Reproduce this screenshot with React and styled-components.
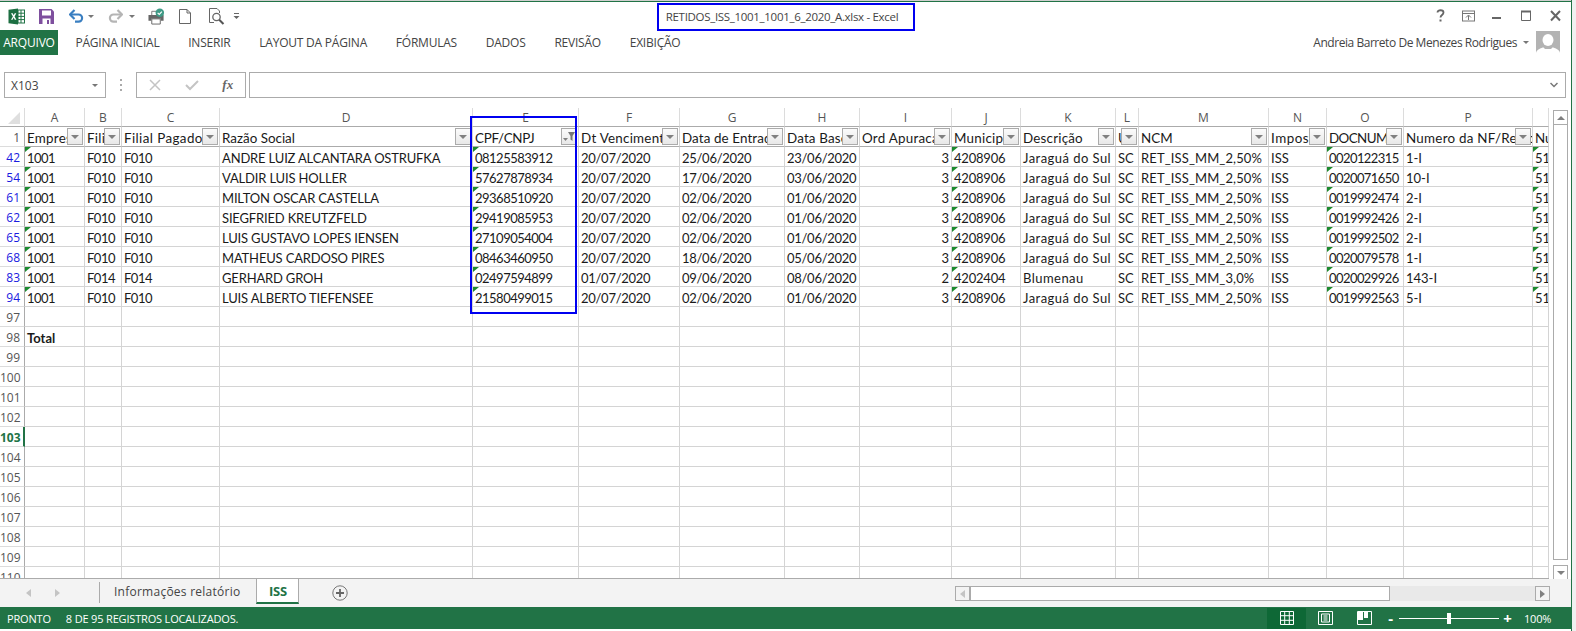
import React from "react";
import styled, { createGlobalStyle } from "styled-components";

const Global = createGlobalStyle`
  html, body { margin: 0; padding: 0; background: #e8e8e8; }
  body { width: 1576px; height: 631px; overflow: hidden; font-family: "Open Sans", "Liberation Sans", sans-serif; }
`;

const GREEN = "#217346";

const Page = styled.div`
  position: relative;
  width: 1576px;
  height: 631px;
  overflow: hidden;
`;
const Win = styled.div`
  width: 1571px;
  height: 631px;
  background: #fff;
  border-right: 1px solid ${GREEN};
  display: flex;
  flex-direction: column;
`;
const TopStrip = styled.div`
  height: 1px;
  flex: none;
  box-sizing: content-box;
  background: #cfcfcf;
  border-bottom: 1px solid ${GREEN};
`;
const TitleBar = styled.div`
  height: 28px;
  flex: none;
  display: grid;
  grid-template-columns: 1fr auto 1fr;
  align-items: center;
`;
const Qat = styled.div`
  display: flex;
  align-items: center;
`;
const QatItem = styled.span`
  display: flex;
  margin-left: ${(p) => p.$ml}px;
`;
const Title = styled.div`
  font-size: 11.5px;
  color: #444;
  letter-spacing: -0.31px;
  white-space: nowrap;
  padding-right: 7px;
`;
const WinControls = styled.div`
  display: flex;
  justify-content: flex-end;
  align-items: center;
  padding-right: 3px;
`;
const Ribbon = styled.div`
  height: 25px;
  flex: none;
  display: flex;
  align-items: center;
`;
const FileTab = styled.div`
  width: 58px;
  height: 25px;
  background: ${GREEN};
  color: #fff;
  font-size: 12px;
  line-height: 25px;
  text-align: center;
  letter-spacing: -0.2px;
  margin-right: 3px;
`;
const RibbonTab = styled.div`
  font-size: 12px;
  color: #444;
  padding: 0 14.4px;
  letter-spacing: -0.22px;
  white-space: nowrap;
`;
const Account = styled.div`
  margin-left: auto;
  display: flex;
  align-items: center;
  font-size: 12px;
  color: #444;
  letter-spacing: -0.45px;
  padding-right: 11px;
  height: 25px;
`;
const Caret = styled.span`
  width: 0;
  height: 0;
  border-left: 3px solid transparent;
  border-right: 3px solid transparent;
  border-top: 3px solid #777;
  margin: 0 ${(p) => p.$mr ?? 7}px 0 ${(p) => p.$ml ?? 6}px;
`;
const FormulaBar = styled.div`
  height: 26px;
  flex: none;
  margin: 17px 5px 10px 4px;
  display: flex;
  align-items: stretch;
`;
const NameBox = styled.div`
  width: 102px;
  box-sizing: border-box;
  border: 1px solid #ababab;
  display: flex;
  align-items: center;
  justify-content: space-between;
  padding: 0 6px;
  font-size: 12px;
  color: #444;
`;
const Dots = styled.div`
  width: 30px;
  display: flex;
  flex-direction: column;
  align-items: center;
  justify-content: center;
  gap: 3px;
  & > i { width: 2px; height: 2px; background: #aaa; display: block; }
`;
const FnBox = styled.div`
  width: 110px;
  box-sizing: border-box;
  border: 1px solid #ababab;
  display: flex;
  align-items: center;
  justify-content: space-around;
  margin-right: 3px;
  color: #bbb;
`;
const Fx = styled.span`
  font: italic 700 13px "Liberation Serif", serif;
  color: #666;
`;
const FormulaInput = styled.div`
  flex: 1;
  box-sizing: border-box;
  border: 1px solid #ababab;
  display: flex;
  align-items: center;
  justify-content: flex-end;
  padding-right: 7px;
`;
const GridArea = styled.div`
  height: 471px;
  flex: none;
  display: flex;
  align-items: flex-start;
`;
const GridClip = styled.div`
  width: 1549px;
  height: 471px;
  overflow: hidden;
  border-bottom: 1px solid #ababab;
  box-sizing: border-box;
  flex: none;
`;
const Sheet = styled.table`
  border-collapse: separate;
  border-spacing: 0;
  table-layout: fixed;
  width: 1549px;
  font-family: Lato, "Open Sans", sans-serif;
  font-size: 13px;
  color: #1a1a1a;
`;
const ColHead = styled.th`
  height: 19px;
  box-sizing: border-box;
  padding: 0;
  font-weight: 400;
  font-family: "Open Sans", sans-serif;
  font-size: 12px;
  color: #555;
  text-align: center;
  border-right: 1px solid #dcdcdc;
  border-bottom: 1px solid #ababab;
  position: relative;
`;
const Corner = styled.th`
  height: 19px;
  box-sizing: border-box;
  padding: 0;
  position: relative;
  border-right: 1px solid #dcdcdc;
  border-bottom: 1px solid #ababab;
  &::after {
    content: "";
    position: absolute;
    right: 4px;
    bottom: 2px;
    border-left: 12px solid transparent;
    border-bottom: 12px solid #dfdfdf;
  }
`;
const RowHead = styled.td`
  height: 20px;
  box-sizing: border-box;
  padding: 2px 4px 0 0;
  vertical-align: top;
  text-align: right;
  font-family: "Open Sans", sans-serif;
  font-size: 12px;
  line-height: 17px;
  color: ${(p) => (p.$hit ? "#1a1ae0" : p.$active ? GREEN : "#555")};
  font-weight: ${(p) => (p.$active ? 700 : 400)};
  border-bottom: 1px solid #dcdcdc;
  border-right: ${(p) => (p.$active ? `2px solid ${GREEN}` : "1px solid #ababab")};
  white-space: nowrap;
  overflow: hidden;
`;
const Cell = styled.td`
  height: 20px;
  box-sizing: border-box;
  padding: 4px 2px 0;
  line-height: 15px;
  vertical-align: top;
  position: relative;
  white-space: nowrap;
  overflow: hidden;
  border-right: 1px solid #d4d4d4;
  border-bottom: 1px solid #d4d4d4;
  text-align: ${(p) => (p.$right ? "right" : "left")};
  font-weight: ${(p) => (p.$bold ? 700 : 400)};
  letter-spacing: ${(p) => p.$ls ?? 0}px;
  ${(p) =>
    p.$flag &&
    `&::before {
      content: "";
      position: absolute;
      left: 0;
      top: 0;
      border-top: 5px solid #1c8a2e;
      border-right: 6px solid transparent;
    }`}
`;
const HeadCell = styled(Cell)`
  font-size: 13.4px;
  border-bottom: 1px solid #ababab;
`;
const FilterBtn = styled.span`
  position: absolute;
  right: 1px;
  top: 1px;
  width: 16px;
  height: 17px;
  box-sizing: border-box;
  border: 1px solid #ababab;
  background: linear-gradient(#fbfbfb, #e8e8e8);
  display: flex;
  align-items: center;
  justify-content: center;
  &::after {
    content: "";
    border-left: 4px solid transparent;
    border-right: 4px solid transparent;
    border-top: 4px solid #808080;
  }
`;
const FilterOn = styled(FilterBtn)`
  &::after { display: none; }
`;
const VScroll = styled.div`
  width: 15px;
  height: 470px;
  margin: 2px 0 0 4px;
  display: flex;
  flex-direction: column;
  flex: none;
`;
const SBtn = styled.div`
  flex: none;
  width: 15px;
  height: 15px;
  box-sizing: border-box;
  border: 1px solid #ababab;
  display: flex;
  align-items: center;
  justify-content: center;
`;
const VThumb = styled.div`
  height: 435px;
  flex: none;
  box-sizing: border-box;
  border: 1px solid #ababab;
  border-top: none;
`;
const VTrack = styled.div`
  flex: 1;
`;
const TriV = styled.span`
  width: 0;
  height: 0;
  border-left: 4px solid transparent;
  border-right: 4px solid transparent;
  ${(p) => (p.$up ? "border-bottom: 4px solid #808080;" : "border-top: 4px solid #808080;")}
`;
const TabBar = styled.div`
  height: 28px;
  flex: none;
  background: #f3f3f3;
  display: flex;
  align-items: stretch;
`;
const NavArrows = styled.div`
  width: 99px;
  box-sizing: border-box;
  padding: 0 39px 0 26px;
  display: flex;
  align-items: center;
  justify-content: space-between;
`;
const Tri = styled.span`
  width: 0;
  height: 0;
  border-top: 4px solid transparent;
  border-bottom: 4px solid transparent;
  ${(p) => (p.$left ? "border-right: 5px solid #c4c4c4;" : "border-left: 5px solid #c4c4c4;")}
`;
const TabDivider = styled.div`
  width: 1px;
  height: 21px;
  background: #ababab;
  margin-top: 3px;
`;
const SheetTab = styled.div`
  font-size: 12px;
  color: #444;
  line-height: 26px;
  padding: 0 16px 0 14px;
  letter-spacing: 0.25px;
  white-space: nowrap;
`;
const ActiveTab = styled.div`
  width: 43px;
  height: 25px;
  box-sizing: border-box;
  background: #fff;
  border-left: 1px solid #ababab;
  border-right: 1px solid #ababab;
  border-bottom: 2px solid ${GREEN};
  color: ${GREEN};
  font-size: 13px;
  font-weight: 700;
  letter-spacing: -0.3px;
  line-height: 24px;
  text-align: center;
`;
const AddSheet = styled.div`
  margin-left: 33px;
  display: flex;
  align-items: center;
`;
const HScroll = styled.div`
  margin: 7px 21px 6px auto;
  width: 595px;
  display: flex;
  align-items: stretch;
`;
const HThumb = styled.div`
  width: 420px;
  box-sizing: border-box;
  border: 1px solid #ababab;
  background: #fff;
  flex: none;
`;
const HTrack = styled.div`
  flex: 1;
  background: #e9e9e9;
`;
const HBtn = styled.div`
  width: 15px;
  box-sizing: border-box;
  border: 1px solid #ababab;
  background: #f3f3f3;
  flex: none;
  display: flex;
  align-items: center;
  justify-content: center;
`;
const DarkTri = styled(Tri)`
  border-left-color: #808080;
  border-right-color: #808080;
`;
const Status = styled.div`
  height: 22px;
  flex: none;
  background: ${GREEN};
  color: #fff;
  display: flex;
  align-items: center;
  font-size: 11px;
  padding-left: 7px;
  letter-spacing: -0.17px;
`;
const StatusMsg = styled.span`
  margin-left: 15px;
  white-space: nowrap;
`;
const ViewGroup = styled.div`
  margin-left: auto;
  display: flex;
  align-items: center;
  height: 22px;
`;
const ViewBtn = styled.div`
  width: 39px;
  height: 21px;
  display: flex;
  align-items: center;
  justify-content: center;
  background: ${(p) => (p.$on ? "#0e6836" : "transparent")};
`;
const ZoomWrap = styled.div`
  display: flex;
  align-items: center;
  margin-left: 2px;
  gap: 4px;
`;
const ZoomTrack = styled.div`
  width: 100px;
  height: 1px;
  background: #fff;
  position: relative;
`;
const ZoomKnob = styled.span`
  position: absolute;
  left: 48px;
  top: -5px;
  width: 4px;
  height: 11px;
  background: #fff;
`;
const ZoomBtn = styled.span`
  font-size: 15px;
  font-weight: 700;
  line-height: 1;
  width: 9px;
  text-align: center;
`;
const ZoomPct = styled.span`
  width: 47px;
  margin-left: 8px;
  white-space: nowrap;
`;
const BlueBox = styled.div`
  position: absolute;
  box-sizing: border-box;
  border: 2.5px solid #0000f0;
  pointer-events: none;
  left: ${(p) => p.$x}px;
  top: ${(p) => p.$y}px;
  width: ${(p) => p.$w}px;
  height: ${(p) => p.$h}px;
`;
const EdgeRight = styled.div`
  position: absolute;
  right: 0;
  top: 0;
  width: 4px;
  height: 631px;
  background: #f0f0f0;
`;

const cols = [60, 37, 98, 253, 106, 101, 105, 75, 92, 69, 95, 23, 130, 58, 77, 129, 16];
const letters = "ABCDEFGHIJKLMNOPQ".split("").map((l, i) => (i === 16 ? "" : l));
const headers = ["Empresa", "Filial", "Filial Pagador", "Razão Social", "CPF/CNPJ", "Dt Vencimento", "Data de Entrada", "Data Base", "Ord Apuracao", "Municipio", "Descrição", "UF", "NCM", "Imposto", "DOCNUM", "Numero da NF/Recibo", "Nu"];
const headSpacing = [0.25, 0.25, 0.4, 0, -0.3, 0.25, 0.1, 0.15, 0.25, 0.25, 0.2, 0, 0, 0.5, -0.6, 0.25, 0];
const J = ["4208906", "Jaraguá do Sul", "SC", "RET_ISS_MM_2,50%", "ISS"];
const rows = [
  ["42", "F010", "ANDRE LUIZ ALCANTARA OSTRUFKA", "08125583912", "20/07/2020", "25/06/2020", "23/06/2020", "3", J, "0020122315", "1-I"],
  ["54", "F010", "VALDIR LUIS HOLLER", "57627878934", "20/07/2020", "17/06/2020", "03/06/2020", "3", J, "0020071650", "10-I"],
  ["61", "F010", "MILTON OSCAR CASTELLA", "29368510920", "20/07/2020", "02/06/2020", "01/06/2020", "3", J, "0019992474", "2-I"],
  ["62", "F010", "SIEGFRIED KREUTZFELD", "29419085953", "20/07/2020", "02/06/2020", "01/06/2020", "3", J, "0019992426", "2-I"],
  ["65", "F010", "LUIS GUSTAVO LOPES IENSEN", "27109054004", "20/07/2020", "02/06/2020", "01/06/2020", "3", J, "0019992502", "2-I"],
  ["68", "F010", "MATHEUS CARDOSO PIRES", "08463460950", "20/07/2020", "18/06/2020", "05/06/2020", "3", J, "0020079578", "1-I"],
  ["83", "F014", "GERHARD GROH", "02497594899", "01/07/2020", "09/06/2020", "08/06/2020", "2", ["4202404", "Blumenau", "SC", "RET_ISS_MM_3,0%", "ISS"], "0020029926", "143-I"],
  ["94", "F010", "LUIS ALBERTO TIEFENSEE", "21580499015", "20/07/2020", "02/06/2020", "01/06/2020", "3", J, "0019992563", "5-I"],
];
const empties = ["97", "98", "99", "100", "101", "102", "103", "104", "105", "106", "107", "108", "109", "110"];

const Excel = () => (
  <svg width="17" height="17" viewBox="0 0 17 17">
    <rect x="6" y="2" width="10.5" height="13" fill="#fff" stroke="#217346" />
    <path d="M10 2v13M13 2v13M6 5.2h10M6 8.4h10M6 11.6h10" stroke="#217346" strokeWidth="1" />
    <path d="M0.5 1.8 10 0.5v16L0.5 15.2z" fill="#1d6f42" />
    <path d="M3 5.2h1.7l1 2.1 1-2.1h1.6L6.6 8.5l1.8 3.3H6.7l-1-2.2-1.1 2.2H3l1.9-3.3z" fill="#fff" />
  </svg>
);
const Save = () => (
  <svg width="15" height="15" viewBox="0 0 15 15">
    <path d="M0 0h12.5L15 2.5V15H0z" fill="#7e4f9e" />
    <rect x="3" y="1.5" width="9" height="5" fill="#fff" />
    <rect x="3.5" y="9.5" width="8" height="5.5" fill="#fff" />
    <rect x="8" y="11" width="2" height="4" fill="#7e4f9e" />
  </svg>
);
const Undo = ({ c, flip }) => (
  <svg width="15" height="14" viewBox="0 0 15 14" style={flip ? { transform: "scaleX(-1)" } : undefined}>
    <path d="M1 5.5h8.5a3.6 3.6 0 0 1 0 7.2H6" fill="none" stroke={c} strokeWidth="2.2" />
    <path d="M5.5 1 1 5.5 5.5 10" fill="none" stroke={c} strokeWidth="2.2" />
  </svg>
);
const Print = () => (
  <svg width="17" height="17" viewBox="0 0 18 17">
    <path d="M4 3h6v5H4z" fill="#fff" stroke="#777" />
    <path d="M0.5 7h16v6h-3v-2h-10v2h-3z" fill="#666" />
    <path d="M4 11h9v5.5H4z" fill="#fff" stroke="#666" />
    <circle cx="12.5" cy="4.5" r="4.5" fill="#3f9a86" />
    <path d="M10.2 4.6l1.7 1.7 2.8-3" fill="none" stroke="#fff" strokeWidth="1.2" />
  </svg>
);
const NewDoc = () => (
  <svg width="12" height="15" viewBox="0 0 12 15">
    <path d="M0.5 0.5h7.5l3.5 3.5v10.5H0.5zM8 0.5V4h3.5" fill="#fff" stroke="#666" />
  </svg>
);
const Preview = () => (
  <svg width="16" height="17" viewBox="0 0 16 17">
    <path d="M0.5 0.5h7.5l2.5 2.5V5M5 14.5H0.5v-14" fill="none" stroke="#666" />
    <circle cx="7.5" cy="9" r="3.7" fill="#fff" stroke="#666" strokeWidth="1.3" />
    <path d="M10.2 11.7l4.3 4.3" stroke="#555" strokeWidth="2" />
  </svg>
);
const Customize = () => (
  <svg width="7" height="7" viewBox="0 0 7 7">
    <path d="M1 0.5h5" stroke="#666" />
    <path d="M0.5 3h6L3.5 6z" fill="#666" />
  </svg>
);
const Avatar = () => (
  <svg width="24" height="24" viewBox="0 0 24 24">
    <rect width="24" height="24" fill="#b3b3b3" />
    <ellipse cx="12" cy="9" rx="5.5" ry="6" fill="#fff" />
    <path d="M0 24v-2c0-3 5-5 8-6h8c3 1 8 3 8 6v2z" fill="#fff" />
    <path d="M6.5 15.5h11L15 18H9z" fill="#b3b3b3" />
  </svg>
);
const Funnel = () => (
  <svg width="14" height="14" viewBox="0 0 14 14">
    <path d="M6 2h7L10.5 6v5L8.5 9.5V6z" fill="#777" />
    <path d="M1 8h5L3.5 11z" fill="#808080" />
  </svg>
);

const bodySpacing = { a: -0.5, name: -0.17, doc: -0.5, date: -0.28, mun: -0.2, desc: 0.45, ncm: 0.12, num: -0.57 };

function Row({ r }) {
  const [n, f, name, doc, a, b, c, ord, mid, num, nf] = r;
  return (
    <tr>
      <RowHead $hit>{n}</RowHead>
      <Cell $flag $ls={bodySpacing.a}>1001</Cell>
      <Cell $ls={bodySpacing.a}>{f}</Cell>
      <Cell $ls={bodySpacing.a}>{f}</Cell>
      <Cell $ls={bodySpacing.name}>{name}</Cell>
      <Cell $flag $ls={bodySpacing.doc}>{doc}</Cell>
      <Cell $ls={bodySpacing.date}>{a}</Cell>
      <Cell $ls={bodySpacing.date}>{b}</Cell>
      <Cell $ls={bodySpacing.date}>{c}</Cell>
      <Cell $right>{ord}</Cell>
      <Cell $flag $ls={bodySpacing.mun}>{mid[0]}</Cell>
      <Cell $ls={bodySpacing.desc}>{mid[1]}</Cell>
      <Cell>{mid[2]}</Cell>
      <Cell $ls={bodySpacing.ncm}>{mid[3]}</Cell>
      <Cell>{mid[4]}</Cell>
      <Cell $flag $ls={bodySpacing.num}>{num}</Cell>
      <Cell>{nf}</Cell>
      <Cell $flag>51</Cell>
    </tr>
  );
}

export default function App() {
  return (
    <Page>
      <Global />
      <EdgeRight />
      <Win>
        <TopStrip />
        <TitleBar>
          <Qat>
            <QatItem $ml={8}><Excel /></QatItem>
            <QatItem $ml={14}><Save /></QatItem>
            <QatItem $ml={15}><Undo c="#3a7fc1" /></QatItem>
            <Caret $ml={4} $mr={0} />
            <QatItem $ml={14}><Undo c="#b5b5b5" flip /></QatItem>
            <Caret $ml={6} $mr={0} />
            <QatItem $ml={13}><Print /></QatItem>
            <QatItem $ml={14}><NewDoc /></QatItem>
            <QatItem $ml={18}><Preview /></QatItem>
            <QatItem $ml={8}><Customize /></QatItem>
          </Qat>
          <Title>RETIDOS_ISS_1001_1001_6_2020_A.xlsx - Excel</Title>
          <WinControls>
            <svg width="134" height="14" viewBox="-2 0 134 14">
              <path d="M1.5 3.5c0-3 6-3 6 0 0 2.5-3 2.5-3 5" fill="none" stroke="#666" strokeWidth="1.8" />
              <rect x="3.5" y="10.5" width="2" height="2" fill="#666" />
              <rect x="26.5" y="2" width="12" height="10" fill="none" stroke="#777" />
              <path d="M26.5 4.5h12M32.5 11V6.5M30 8.5l2.5-2.5 2.5 2.5" fill="none" stroke="#777" />
              <path d="M56 9h9" stroke="#666" strokeWidth="2" />
              <path d="M85.5 2.5h9v9h-9z" fill="none" stroke="#666" />
              <path d="M85 2.5h10" stroke="#666" strokeWidth="2" />
              <path d="M115 2l9 9.5M124 2l-9 9.5" stroke="#666" strokeWidth="2" />
            </svg>
          </WinControls>
        </TitleBar>
        <Ribbon>
          <FileTab>ARQUIVO</FileTab>
          {["PÁGINA INICIAL", "INSERIR", "LAYOUT DA PÁGINA", "FÓRMULAS", "DADOS", "REVISÃO", "EXIBIÇÃO"].map((t) => (
            <RibbonTab key={t}>{t}</RibbonTab>
          ))}
          <Account>
            Andreia Barreto De Menezes Rodrigues
            <Caret />
            <Avatar />
          </Account>
        </Ribbon>
        <FormulaBar>
          <NameBox>
            X103
            <Caret $ml={0} $mr={1} />
          </NameBox>
          <Dots><i /><i /><i /></Dots>
          <FnBox>
            <svg width="12" height="12" viewBox="0 0 12 12"><path d="M1 1l10 10M11 1L1 11" stroke="#c4c4c4" strokeWidth="1.5" /></svg>
            <svg width="14" height="12" viewBox="0 0 14 12"><path d="M1 6l4 4 8-8" fill="none" stroke="#c4c4c4" strokeWidth="2" /></svg>
            <Fx>fx</Fx>
          </FnBox>
          <FormulaInput>
            <svg width="8" height="6" viewBox="0 0 8 6"><path d="M0.5 1l3.5 3.5L7.5 1" fill="none" stroke="#777" strokeWidth="1.5" /></svg>
          </FormulaInput>
        </FormulaBar>
        <GridArea>
          <GridClip>
            <Sheet>
              <colgroup>
                <col style={{ width: 25 }} />
                {cols.map((w, i) => <col key={i} style={{ width: w }} />)}
              </colgroup>
              <thead>
                <tr>
                  <Corner />
                  {letters.map((l, i) => <ColHead key={i}>{l}</ColHead>)}
                </tr>
              </thead>
              <tbody>
                <tr>
                  <RowHead>1</RowHead>
                  {headers.map((h, i) => (
                    <HeadCell key={h} $ls={headSpacing[i]}>
                      {h}
                      {i === 4 ? <FilterOn><Funnel /></FilterOn> : i < 16 ? <FilterBtn /> : null}
                    </HeadCell>
                  ))}
                </tr>
                {rows.map((r) => <Row key={r[0]} r={r} />)}
                {empties.map((n) => (
                  <tr key={n}>
                    <RowHead $active={n === "103"}>{n}</RowHead>
                    {cols.map((_, i) => (
                      <Cell key={i} $bold={n === "98" && i === 0}>{n === "98" && i === 0 ? "Total" : ""}</Cell>
                    ))}
                  </tr>
                ))}
              </tbody>
            </Sheet>
          </GridClip>
          <VScroll>
            <SBtn><TriV $up /></SBtn>
            <VThumb />
            <VTrack />
            <SBtn><TriV /></SBtn>
          </VScroll>
        </GridArea>
        <TabBar>
          <NavArrows><Tri $left /><Tri /></NavArrows>
          <TabDivider />
          <SheetTab>Informações relatório</SheetTab>
          <ActiveTab>ISS</ActiveTab>
          <AddSheet>
            <svg width="16" height="16" viewBox="0 0 16 16">
              <circle cx="8" cy="8" r="7.2" fill="none" stroke="#777" />
              <path d="M8 4v8M4 8h8" stroke="#666" strokeWidth="1.8" />
            </svg>
          </AddSheet>
          <HScroll>
            <HBtn><Tri $left /></HBtn>
            <HThumb />
            <HTrack />
            <HBtn><DarkTri /></HBtn>
          </HScroll>
        </TabBar>
        <Status>
          PRONTO
          <StatusMsg>8 DE 95 REGISTROS LOCALIZADOS.</StatusMsg>
          <ViewGroup>
            <ViewBtn $on>
              <svg width="14" height="14" viewBox="0 0 14 14"><path d="M0.5 0.5h13v13h-13zM4.7 0.5v13M9.3 0.5v13M0.5 4.7h13M0.5 9.3h13" fill="none" stroke="#fff" /></svg>
            </ViewBtn>
            <ViewBtn>
              <svg width="15" height="14" viewBox="0 0 15 14"><path d="M0.5 0.5h14v13h-14zM3.5 3h8v8h-8zM5.5 5h4M5.5 7h4M5.5 9h4" fill="none" stroke="#fff" /></svg>
            </ViewBtn>
            <ViewBtn>
              <svg width="15" height="14" viewBox="0 0 15 14"><path d="M0.5 0.5h14v13h-14z" fill="none" stroke="#fff" /><path d="M1 1h5v8H1zM7 1h4v6H7z" fill="#fff" /></svg>
            </ViewBtn>
            <ZoomWrap>
              <ZoomBtn>-</ZoomBtn>
              <ZoomTrack><ZoomKnob /></ZoomTrack>
              <ZoomBtn>+</ZoomBtn>
              <ZoomPct>100%</ZoomPct>
            </ZoomWrap>
          </ViewGroup>
        </Status>
      </Win>
      <BlueBox $x={657} $y={3} $w={258} $h={28} />
      <BlueBox $x={470} $y={116} $w={107} $h={198} />
    </Page>
  );
}
